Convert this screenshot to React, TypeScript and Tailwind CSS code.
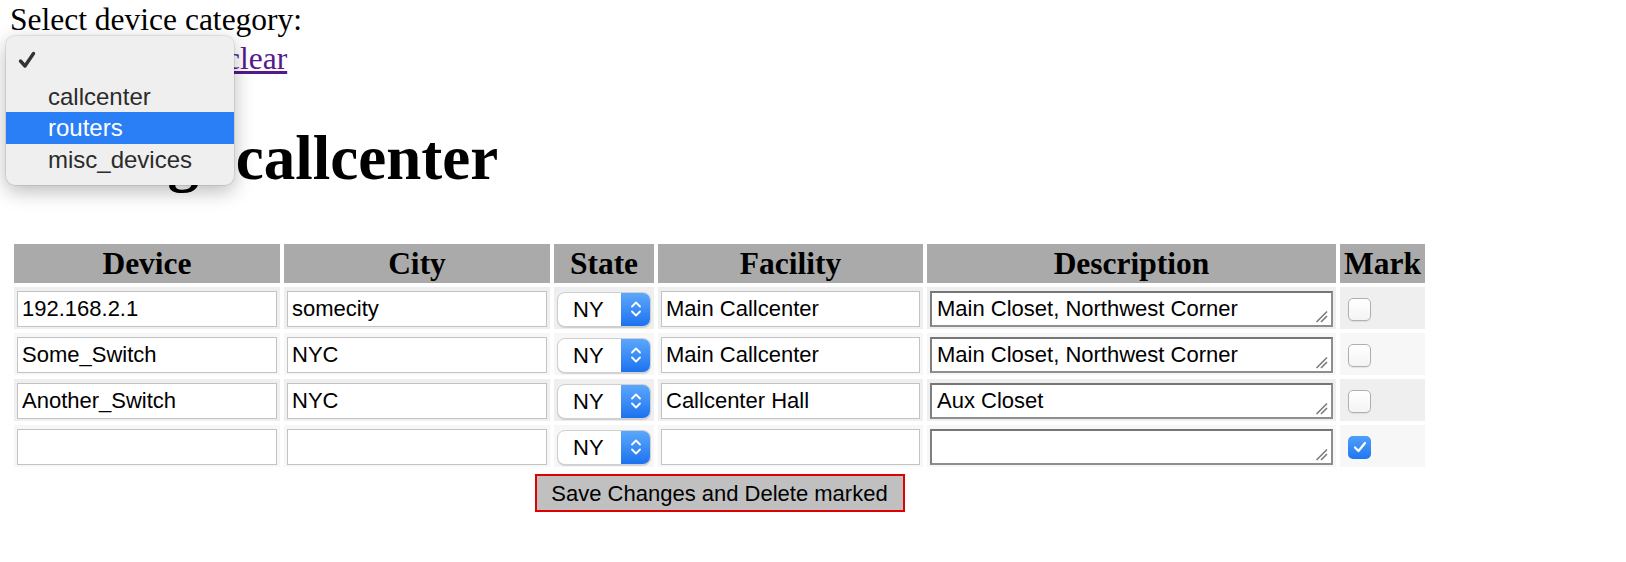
import React from "react";

type Row = {
  device: string;
  city: string;
  state: string;
  facility: string;
  desc: string;
  marked: boolean;
};

const rows: Row[] = [
  { device: "192.168.2.1", city: "somecity", state: "NY", facility: "Main Callcenter", desc: "Main Closet, Northwest Corner", marked: false },
  { device: "Some_Switch", city: "NYC", state: "NY", facility: "Main Callcenter", desc: "Main Closet, Northwest Corner", marked: false },
  { device: "Another_Switch", city: "NYC", state: "NY", facility: "Callcenter Hall", desc: "Aux Closet", marked: false },
  { device: "", city: "", state: "NY", facility: "", desc: "", marked: true },
];

const headers = [
  { label: "Device", w: "w-[266px]" },
  { label: "City", w: "w-[266px]" },
  { label: "State", w: "w-[99px]" },
  { label: "Facility", w: "w-[265px]" },
  { label: "Description", w: "w-[409px]" },
  { label: "Mark", w: "w-[85px]" },
];

function TextBox({ value }: { value: string }) {
  return (
    <input
      readOnly
      value={value}
      className="block h-[36px] w-full border border-[#c3c3c3] bg-white px-[4px] font-['Liberation_Sans',Arial,sans-serif] text-[22px] leading-[25px] text-black outline-none"
    />
  );
}

function StateSelect({ value }: { value: string }) {
  return (
    <div className="flex h-[35px] w-[94px] overflow-hidden rounded-[8px] border border-[#cfcfcf] bg-white shadow-[0_1px_1px_rgba(0,0,0,0.15)]">
      <div className="flex flex-1 items-center pl-[15px] font-['Liberation_Sans',Arial,sans-serif] text-[22px] text-black">
        {value}
      </div>
      <div className="flex w-[29px] items-center justify-center bg-gradient-to-b from-[#5ba7fc] to-[#1b72ef]">
        <svg width="12" height="20" viewBox="0 0 12 20" fill="none">
          <path d="M2 7.5 L6 3.5 L10 7.5" stroke="white" strokeWidth="1.8" strokeLinecap="round" strokeLinejoin="round" />
          <path d="M2 12.5 L6 16.5 L10 12.5" stroke="white" strokeWidth="1.8" strokeLinecap="round" strokeLinejoin="round" />
        </svg>
      </div>
    </div>
  );
}

function TextArea({ value }: { value: string }) {
  return (
    <div className="relative h-[36px] w-full border-2 border-[#8e8e8e] border-t-[#767676] border-l-[#7f7f7f] bg-white pl-[5px] pt-[3px] font-['Liberation_Sans',Arial,sans-serif] text-[22px] leading-[25px] text-black">
      {value}
      <svg className="absolute bottom-[2px] right-[3px]" width="13" height="13" viewBox="0 0 13 13">
        <path d="M1.5 12 L12 1.5" stroke="#7a7a7a" strokeWidth="1.6" />
        <path d="M6 12 L12 6" stroke="#7a7a7a" strokeWidth="1.6" />
      </svg>
    </div>
  );
}

function Checkbox({ checked }: { checked: boolean }) {
  if (checked) {
    return (
      <div className="flex h-[23px] w-[23px] items-center justify-center rounded-[5px] bg-gradient-to-b from-[#4f9ffb] to-[#1f76f1]">
        <svg width="14" height="12" viewBox="0 0 14 12" fill="none">
          <path d="M2 6.5 L5.5 10 L12 2" stroke="white" strokeWidth="2.2" strokeLinecap="round" strokeLinejoin="round" />
        </svg>
      </div>
    );
  }
  return (
    <div className="h-[23px] w-[23px] rounded-[5px] border border-[#b0b0b0] bg-gradient-to-b from-white to-[#f4f4f4] shadow-[0_1px_1px_rgba(0,0,0,0.08)]" />
  );
}

export default function App() {
  return (
    <div className="relative min-h-screen bg-white px-[10px] font-['Liberation_Serif','Times_New_Roman',serif] text-black">
      <div className="pt-[2px] text-[31.5px] leading-[36px]">Select device category:</div>

      {/* closed select sits under the open menu */}
      <div className="mt-[3px] flex h-[36px] items-center gap-[8px] text-[31.5px] leading-[36px]">
        <span className="inline-block h-[30px] w-[208px] rounded-[6px] border border-[#cfcfcf] bg-white" />
        <a href="#" className="text-[#551a8b] underline">clear</a>
      </div>

      <h1 className="mt-[45px] text-[63px] font-bold leading-[72px]">Listing: callcenter</h1>

      <table className="mt-[46px] table-fixed border-separate border-spacing-[4px]">
        <thead>
          <tr>
            {headers.map((h) => (
              <th
                key={h.label}
                className={`${h.w} h-[39px] bg-[#aaaaaa] p-0 text-center align-middle text-[31.5px] font-bold leading-[36px]`}
              >
                {h.label}
              </th>
            ))}
          </tr>
        </thead>
        <tbody>
          {rows.map((r, i) => (
            <tr key={i} className={i % 2 === 0 ? "bg-[#efefef]" : "bg-[#f7f7f7]"}>
              <td className="h-[42px] px-[3px] pb-[2px] pt-[4px] align-middle">
                <TextBox value={r.device} />
              </td>
              <td className="px-[3px] pb-[2px] pt-[4px] align-middle">
                <TextBox value={r.city} />
              </td>
              <td className="px-[3px] pb-[2px] pt-[4px] align-middle">
                <StateSelect value={r.state} />
              </td>
              <td className="px-[3px] pb-[2px] pt-[4px] align-middle">
                <TextBox value={r.facility} />
              </td>
              <td className="px-[3px] pb-[2px] pt-[4px] align-middle">
                <TextArea value={r.desc} />
              </td>
              <td className="pb-[2px] pl-[8px] pt-[4px] align-middle">
                <Checkbox checked={r.marked} />
              </td>
            </tr>
          ))}
          <tr>
            <td colSpan={6} className="p-[3px] text-center">
              <button className="h-[38px] w-[370px] border-2 border-[#e00000] bg-[#c0c0c0] font-['Liberation_Sans',Arial,sans-serif] text-[22px] text-black">
                Save Changes and Delete marked
              </button>
            </td>
          </tr>
        </tbody>
      </table>

      {/* open category menu */}
      <div className="absolute left-[6px] top-[36px] w-[228px] rounded-[9px] bg-[#efefef] pb-[10px] font-['Liberation_Sans',Arial,sans-serif] text-[24px] leading-[31px] text-[#2b2b2b] shadow-[0_6px_20px_rgba(0,0,0,0.28),0_0_0_1px_rgba(0,0,0,0.08)]">
        <div className="relative h-[45px]">
          <svg className="absolute left-[11px] top-[14px]" width="20" height="20" viewBox="0 0 20 20" fill="none">
            <path d="M3.5 11 L8 16 L16.5 3.5" stroke="#333" strokeWidth="3.4" strokeLinecap="round" strokeLinejoin="round" />
          </svg>
        </div>
        <div className="h-[31px] pl-[42px]">callcenter</div>
        <div className="h-[32px] bg-[#2a7ff7] pl-[42px] leading-[32px] text-white">routers</div>
        <div className="h-[31px] pl-[42px]">misc_devices</div>
      </div>
    </div>
  );
}
